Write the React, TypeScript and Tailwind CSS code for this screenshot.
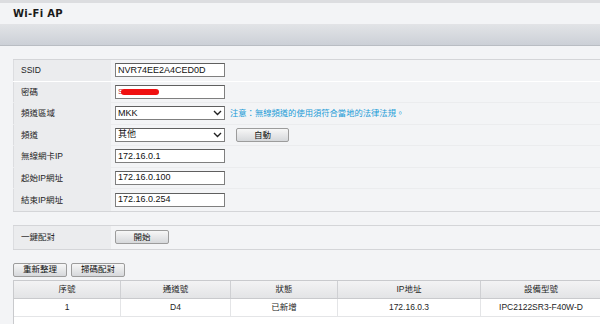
import React from 'react';

const FONT = { fontFamily: '"Liberation Sans", "Noto Sans CJK TC", sans-serif' };

const TextBox = ({ value }: { value?: string }) => (
  <div className="w-[110px] h-[14px] bg-white border border-[#7f7f7f] border-t-[#5f5f5f] flex items-center px-[2px] text-[9px] text-[#111] leading-none">
    {value}
  </div>
);

const SelectBox = ({ value }: { value: string }) => (
  <div className="w-[110px] h-[14px] bg-white border border-[#7f7f7f] border-t-[#5f5f5f] flex items-center justify-between px-[2px] text-[9px] text-[#111] leading-none">
    <span>{value}</span>
    <svg width="9" height="6" viewBox="0 0 9 6">
      <polyline points="1,1 4.5,4.5 8,1" fill="none" stroke="#222" strokeWidth="1.4" />
    </svg>
  </div>
);

const Btn = ({ label, w }: { label: string; w: string }) => (
  <div className={`${w} h-[14px] rounded-[2px] border border-[#9c9c9c] bg-gradient-to-b from-[#f7f7f7] to-[#d6d8db] flex items-center justify-center text-[8.5px] text-[#111] leading-none`}>
    {label}
  </div>
);

const rows: { label: string; field: React.ReactNode }[] = [
  { label: 'SSID', field: <TextBox value="NVR74EE2A4CED0D" /> },
  {
    label: '密碼',
    field: (
      <div className="w-[110px] h-[14px] bg-white border border-[#7f7f7f] border-t-[#5f5f5f] flex items-center pl-[2px]">
        <span className="text-[8px] text-[#b33] leading-none">S</span>
        <div className="-ml-[2px] w-[38px] h-[6px] rounded-full bg-[#f01010]" />
      </div>
    ),
  },
  {
    label: '頻道區域',
    field: (
      <div className="flex items-center gap-[5px]">
        <SelectBox value="MKK" />
        <span className="text-[8.3px] text-[#1b9bd6]">注意：無線頻道的使用須符合當地的法律法規。</span>
      </div>
    ),
  },
  {
    label: '頻道',
    field: (
      <div className="flex items-center gap-[11px]">
        <SelectBox value="其他" />
        <Btn label="自動" w="w-[53px]" />
      </div>
    ),
  },
  { label: '無線網卡IP', field: <TextBox value="172.16.0.1" /> },
  { label: '起始IP網址', field: <TextBox value="172.16.0.100" /> },
  { label: '結束IP網址', field: <TextBox value="172.16.0.254" /> },
];

const cols = [
  { title: '序號', w: 'w-[107px] border-r', v: '1' },
  { title: '通道號', w: 'w-[110px] border-r', v: 'D4' },
  { title: '狀態', w: 'w-[107px] border-r', v: '已新增' },
  { title: 'IP地址', w: 'w-[143px] border-r', v: '172.16.0.3' },
  { title: '設備型號', w: 'w-[120px]', v: 'IPC2122SR3-F40W-D' },
];

export default function App() {
  return (
    <div className="w-[600px] h-[324px] overflow-hidden bg-[#f3f4f6] text-[#1e1e1e]" style={FONT}>
      {/* Title */}
      <div className="h-[3px] bg-[#dcdde0]" />
      <div className="h-[22px] px-[13px] flex items-center border-b border-[#e2e3e6]">
        <span className="text-[10px] font-bold tracking-[0.3px] text-[#1a1a1a]" style={{ fontFamily: '"DejaVu Sans", sans-serif' }}>
          Wi-Fi AP
        </span>
      </div>
      <div className="h-[21px] bg-gradient-to-b from-[#e1e3e6] to-[#ccd0d7] border-b border-[#b9bdc3]" />

      <div className="pl-[13px] pt-[13px]">
        {/* Settings form */}
        <div className="border-t border-b border-[#d4d5d8]">
          {rows.map((r, i) => (
            <div key={r.label} className={`flex h-[21.5px] ${i === 0 ? 'border-b border-white' : i < rows.length - 1 ? 'border-b border-[#ebecee]' : ''}`}>
              <div className="w-[98px] shrink-0 bg-[#ebecee] border-l border-[#dcdde0] flex items-center pl-[7px] text-[8.5px] leading-none">
                {r.label}
              </div>
              <div className="flex-1 flex items-center pl-[4px]">{r.field}</div>
            </div>
          ))}
        </div>

        {/* One-key pairing */}
        <div className="mt-[13px] flex h-[25px] border-t border-b border-[#d4d5d8]">
          <div className="w-[98px] shrink-0 bg-[#ebecee] border-l border-[#dcdde0] flex items-center pl-[7px] text-[8.5px] leading-none">
            一鍵配對
          </div>
          <div className="flex-1 flex items-center pl-[4px]">
            <Btn label="開始" w="w-[54px]" />
          </div>
        </div>

        {/* Actions */}
        <div className="mt-[13px] flex gap-[4px]">
          <Btn label="重新整理" w="w-[54px]" />
          <Btn label="掃碼配對" w="w-[54px]" />
        </div>

        {/* Device table */}
        <div className="mt-[3px] bg-white border-l border-t border-[#c9cacd] h-[60px]">
          <div className="flex h-[18px] bg-gradient-to-b from-[#f3f3f4] to-[#e3e4e6] border-b border-[#c9cacd]">
            {cols.map((c) => (
              <div key={c.title} className={`${c.w} shrink-0 border-[#cfd0d3] flex items-center justify-center text-[8.5px] leading-none`}>
                {c.title}
              </div>
            ))}
          </div>
          <div className="flex h-[18px] border-b border-[#e4e5e7]">
            {cols.map((c) => (
              <div key={c.title} className={`${c.w} shrink-0 border-[#e4e5e7] flex items-center justify-center text-[8.5px] leading-none`}>
                {c.v}
              </div>
            ))}
          </div>
        </div>
      </div>
    </div>
  );
}
